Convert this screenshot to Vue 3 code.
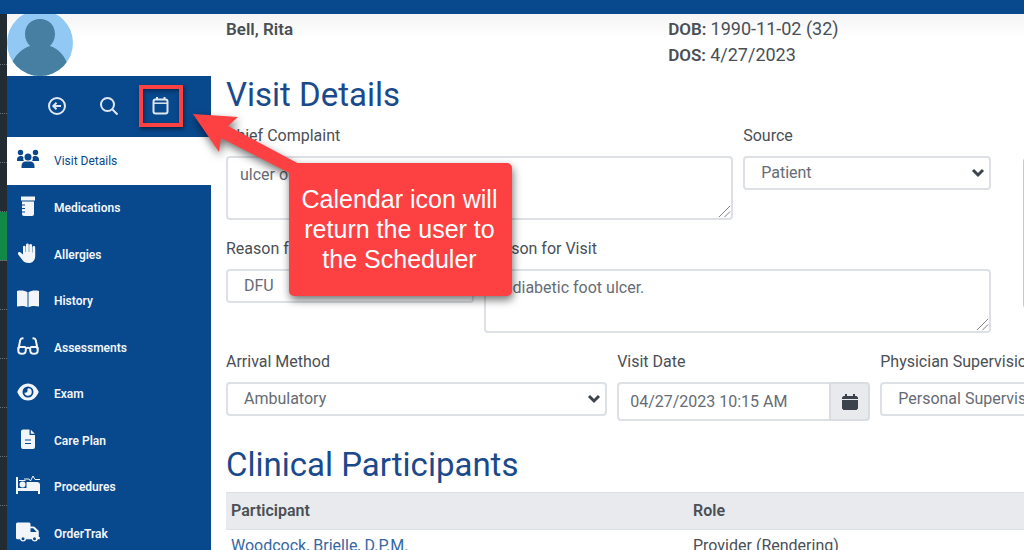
<script setup>
import { ref } from 'vue'

const chiefComplaint = ref('ulcer of right foot')
const visitReason = ref('A diabetic foot ulcer.')
const visitDate = ref('04/27/2023 10:15 AM')

const slots = Array.from({ length: 11 }, (_, i) => ({ id: i, booked: i === 4 }))

const items = [
  { label: 'Visit Details', icon: 'users', active: true },
  { label: 'Medications', icon: 'jar' },
  { label: 'Allergies', icon: 'hand' },
  { label: 'History', icon: 'book' },
  { label: 'Assessments', icon: 'glasses' },
  { label: 'Exam', icon: 'eye' },
  { label: 'Care Plan', icon: 'file' },
  { label: 'Procedures', icon: 'bed' },
  { label: 'OrderTrak', icon: 'truck' },
]
</script>

<template>
  <div class="app">
    <div class="topbar"></div>
    <div class="body">
      <div class="rail">
        <div v-for="s in slots" :key="s.id" class="slot" :class="{ booked: s.booked }"></div>
      </div>

      <aside class="sidebar">
        <div class="portrait">
          <svg class="avatar" viewBox="0 0 66 66" aria-label="Patient photo">
            <defs><clipPath id="face"><circle cx="33" cy="33" r="33" /></clipPath></defs>
            <g clip-path="url(#face)">
              <rect width="66" height="66" fill="#92c8f4" />
              <path d="M33 9c9 0 15 6.500 15 15 0 5-2 9-5 12 9 3 15 10 18 20v12H4V56c3-10 10-17 19-20-3-3-5-7-5-12 0-8.500 6-15 15-15z" fill="#467fa2" />
            </g>
          </svg>
        </div>

        <div class="tools">
          <button type="button" class="tool" aria-label="Back">
            <svg viewBox="0 0 20 20" class="line"><circle cx="10" cy="10" r="8" /><path d="M14 10H6.500M9.500 6.800 6.300 10l3.200 3.200" /></svg>
          </button>
          <button type="button" class="tool" aria-label="Search">
            <svg viewBox="0 0 20 20" class="line"><circle cx="8.500" cy="8.500" r="6.500" /><path d="M13.200 13.200 18.500 18.500" /></svg>
          </button>
          <button type="button" class="tool marked" aria-label="Calendar">
            <svg viewBox="0 0 20 20" class="line"><rect x="2.500" y="3.500" width="14" height="14" rx="2" /><path d="M3 7.200h13" stroke-width="1.500" /><path d="M6 1V3.500M13.500 1V3.500" /></svg>
          </button>
        </div>

        <nav class="menu">
          <a v-for="i in items" :key="i.label" href="#" class="item" :class="{ active: i.active }">
            <svg class="icon" viewBox="0 0 24 20">
              <g v-if="i.icon === 'users'">
                <circle cx="4.500" cy="3.500" r="2.700" /><circle cx="19.500" cy="3.500" r="2.700" />
                <circle cx="12" cy="8" r="3.500" />
                <path d="M1 12V10.500C1 8.500 2.500 7 4.500 7c1.500 0 2.500.5 3 1.200C7 9.500 7.200 11 8 12zM23 12v-1.500C23 8.500 21.500 7 19.500 7c-1.500 0-2.500.5-3 1.200.5 1.300.3 2.800-.5 3.800zM5.500 19V17c0-2.700 1.800-4.500 4-4.500h5c2.200 0 4 1.800 4 4.500v2z" />
              </g>
              <g v-else-if="i.icon === 'jar'">
                <path d="M5 .5h14v4H5z" />
                <path d="M6 5.500h12V18a2 2 0 0 1-2 2H8a2 2 0 0 1-2-2v-1.500h3v-1H6v-2.500h3v-1H6V9.500h3v-1H6z" />
              </g>
              <path v-else-if="i.icon === 'hand'" d="M7 11.500V4a1.300 1.300 0 0 1 2.600 0v5h.4V2a1.400 1.400 0 0 1 2.800 0V9h.4V2.300a1.400 1.400 0 0 1 2.800 0V9.500h.4V4.500a1.400 1.400 0 0 1 2.800 0V13c0 4.300-2.500 7-6.500 7-3 0-5-1-6.500-3.200l-4-5.300c-1-1.600.9-3.200 2.400-2z" />
              <path v-else-if="i.icon === 'book'" d="M11.500 3.300v15C8.500 16.800 5 16.700 1 17.500V2C5 1.200 9 1.600 11.500 3.300zM12.500 3.300v15c3-1.500 6.500-1.600 10.500-.8V2c-4-.8-8-.4-10.500 1.300z" />
              <g v-else-if="i.icon === 'glasses'" class="outline">
                <path d="M2.500 13 4.200 4.200Q4.800 2 7.500 2.400M21.500 13 19.800 4.200Q19.200 2 16.500 2.400M2.500 11h7.200M14.300 11h7.200M9.800 12.500q2.200-1.500 4.400 0" />
                <path d="M2.300 11.200v3.300q0 3.300 3.700 3.300t3.800-3.600v-3M21.700 11.200v3.300q0 3.300-3.700 3.300t-3.800-3.600v-3" />
              </g>
              <path v-else-if="i.icon === 'eye'" fill-rule="evenodd" d="M12 1.500c5 0 8.500 3.500 10.800 8.500-2.300 5-5.800 8.500-10.800 8.500S3.500 15 1.200 10C3.500 5 7 1.500 12 1.500zm0 3a5.500 5.500 0 1 0 0 11 5.500 5.500 0 0 0 0-11zm0 1.800a3.700 3.700 0 1 1-3.600 4.200c1.800.8 3.800-.8 3-3z" />
              <path v-else-if="i.icon === 'file'" fill-rule="evenodd" d="M7 .5h6.500V6H19v12a2 2 0 0 1-2 2H7a2 2 0 0 1-2-2V2.500a2 2 0 0 1 2-2zM14.800.7 18.800 4.700h-4zM9 10.500v1h6v-1zm0 3.500v1h6v-1z" />
              <g v-else-if="i.icon === 'bed'">
                <path d="M0 2h2v11h8.500V7H21q3 0 3 3v9h-2v-3H2v3H0z" />
                <path d="M3 5h6.500v1H3z" />
                <circle cx="6.500" cy="9.500" r="3" />
                <path class="trace" d="M8 4h5l1.500 2L17 1l2 3.500h5" />
              </g>
              <path v-else fill-rule="evenodd" d="M1.500.5h11.500A1.500 1.500 0 0 1 14.500 2v2.500h3l1.200.5 3.700 3.600.4 1.100V15h1v2.200h-1.900a3.200 3.200 0 0 1-6.200 0H10.200a3.200 3.200 0 0 1-6.200 0H1.500A1.500 1.500 0 0 1 0 15.700V2A1.500 1.500 0 0 1 1.500.5zM14.500 6.300v3.600h6.200L17.200 6.300zM7 15.200a1.500 1.500 0 1 0 0 3 1.500 1.500 0 0 0 0-3zm11.500 0a1.500 1.500 0 1 0 0 3 1.500 1.500 0 0 0 0-3z" />
            </svg>
            <span>{{ i.label }}</span>
          </a>
        </nav>
      </aside>

      <main class="main">
        <div class="content">
          <header class="patient">
            <strong>Bell, Rita</strong>
            <div>
              <div><strong>DOB:</strong> <span class="value">1990-11-02 (32)</span></div>
              <div><strong>DOS:</strong> <span class="value">4/27/2023</span></div>
            </div>
          </header>

          <h1>Visit Details</h1>

          <div class="split">
            <div class="stack">
              <div class="row complaint">
                <div class="field">
                  <label for="chief">Chief Complaint</label>
                  <div class="area">
                    <textarea id="chief" v-model="chiefComplaint"></textarea>
                    <svg class="grip" viewBox="0 0 14 14"><path d="M1 13 13 1M7 13l6-6" /></svg>
                  </div>
                </div>
                <div class="field">
                  <label for="source">Source</label>
                  <div class="pick">
                    <select id="source"><option>Patient</option></select>
                    <svg class="chevron" viewBox="0 0 14 10"><path d="M2 2l5 5 5-5" /></svg>
                  </div>
                </div>
              </div>
              <div class="row reason">
                <div class="field">
                  <label for="reason">Reason for DFU</label>
                  <div class="pick">
                    <select id="reason"><option>DFU</option></select>
                    <svg class="chevron" viewBox="0 0 14 10"><path d="M2 2l5 5 5-5" /></svg>
                  </div>
                </div>
                <div class="field">
                  <label for="why">Reason for Visit</label>
                  <div class="area">
                    <textarea id="why" v-model="visitReason"></textarea>
                    <svg class="grip" viewBox="0 0 14 14"><path d="M1 13 13 1M7 13l6-6" /></svg>
                  </div>
                </div>
              </div>
            </div>
            <div class="notes"></div>
          </div>

          <div class="row arrival">
            <div class="field">
              <label for="arrival">Arrival Method</label>
              <div class="pick">
                <select id="arrival"><option>Ambulatory</option></select>
                <svg class="chevron" viewBox="0 0 14 10"><path d="M2 2l5 5 5-5" /></svg>
              </div>
            </div>
            <div class="field">
              <label for="date">Visit Date</label>
              <div class="date">
                <input id="date" v-model="visitDate" type="text" />
                <button type="button" aria-label="Choose date">
                  <svg viewBox="0 0 16 18"><path d="M3 1h2v2h6V1h2v2h1.500L16 4.500V6H0V4.500L1.500 3H3zM0 7h16v8.500L14.500 17h-13L0 15.500z" /></svg>
                </button>
              </div>
            </div>
            <div class="field">
              <label for="supervision">Physician Supervision</label>
              <div class="pick">
                <select id="supervision"><option>Personal Supervision</option></select>
                <svg class="chevron" viewBox="0 0 14 10"><path d="M2 2l5 5 5-5" /></svg>
              </div>
            </div>
          </div>

          <h2>Clinical Participants</h2>
          <table>
            <thead>
              <tr><th scope="col">Participant</th><th scope="col">Role</th></tr>
            </thead>
            <tbody>
              <tr><td><a href="#">Woodcock, Brielle, D.P.M.</a></td><td>Provider (Rendering)</td></tr>
            </tbody>
          </table>
        </div>
      </main>
    </div>

    <div class="callout">
      <svg class="arrow" viewBox="0 0 110 66"><path d="M0 0 45 3 35 12 110 52V66L28 24 26 38z" /></svg>
      <p>Calendar icon will return the user to the Scheduler</p>
    </div>
  </div>
</template>

<style>
body {
  margin: 0;
  overflow: hidden;
}
</style>

<style scoped>
* {
  box-sizing: border-box;
}
.app {
  position: relative;
  display: flex;
  flex-direction: column;
  height: 100vh;
  overflow: hidden;
  background: #fff;
  color: #4a4f56;
  font: 16px/26px Roboto, "Liberation Sans", sans-serif;
}
.topbar {
  flex: none;
  height: 14px;
  background: #08488c;
}
.body {
  display: flex;
  flex: 1;
  min-height: 0;
}
.rail {
  flex: none;
  width: 7px;
  padding-top: 2px;
  overflow: hidden;
  background: #232c33;
}
.slot {
  height: 49px;
  border-bottom: 1px dotted #6a7278;
}
.slot.booked {
  background: #118845;
}
.sidebar {
  flex: none;
  display: flex;
  flex-direction: column;
  width: 204px;
  background: #08488c;
}
.portrait {
  flex: none;
  display: flex;
  align-items: flex-end;
  height: 62px;
  overflow: hidden;
  background: linear-gradient(#f4f4f5, #fff 24px);
}
.avatar {
  flex: none;
  width: 66px;
  height: 66px;
}
.tools {
  flex: none;
  display: flex;
  align-items: center;
  gap: 8px;
  height: 61px;
  padding-bottom: 2px;
  padding-left: 28px;
}
.tool {
  position: relative;
  display: flex;
  align-items: center;
  justify-content: center;
  width: 44px;
  height: 42px;
  padding: 0;
  border: 0;
  background: none;
}
.tool.marked::after {
  content: "";
  position: absolute;
  inset: 0;
  border: 4px solid #fb4141;
  box-shadow: 1px 2px 4px rgba(0, 0, 0, 0.5), inset 1px 2px 4px rgba(0, 0, 0, 0.4);
}
.line {
  width: 20px;
  height: 20px;
  fill: none;
  stroke: #dfe8f2;
  stroke-width: 2;
}
.menu {
  flex: none;
  display: grid;
  grid-template-rows: 48px;
  grid-auto-rows: 1fr;
  height: 420px;
}
.item {
  display: flex;
  align-items: center;
  gap: 14px;
  padding-left: 9px;
  color: #f2f6fa;
  font-size: 12px;
  font-weight: 600;
  text-decoration: none;
}
.item.active {
  background: #fff;
  color: #08488c;
  font-weight: 400;
}
.icon {
  width: 24px;
  height: 20px;
  margin-bottom: 4px;
  fill: currentColor;
}
.outline {
  fill: none;
  stroke: currentColor;
  stroke-width: 2;
}
.trace {
  fill: none;
  stroke: currentColor;
  stroke-width: 1;
}
.main {
  flex: 1;
  min-width: 0;
  padding-left: 15px;
  overflow: hidden;
  background: linear-gradient(#f4f4f5, #fff 24px);
}
.content {
  width: 130%;
}
.patient {
  display: grid;
  grid-template-columns: 442fr 595fr;
  height: 60px;
  padding-top: 2px;
  font-size: 17px;
}
.value {
  font-size: 18px;
}
strong,
th {
  font-weight: 600;
}
h1,
h2 {
  margin: 0;
  color: #1a4a8c;
  font-size: 33px;
  font-weight: 400;
  line-height: 42px;
}
h1 {
  padding-bottom: 7px;
}
h2 {
  padding-top: 23px;
  padding-bottom: 6px;
}
.split {
  display: grid;
  grid-template-columns: 765fr 240fr;
  gap: 32px;
}
.stack {
  display: flex;
  flex-direction: column;
  gap: 16px;
}
.notes {
  margin-top: 34px;
  height: 152px;
  border: 1px solid #c3cad1;
  border-radius: 4px;
}
.row {
  display: grid;
  column-gap: 10px;
  align-items: start;
}
.complaint {
  grid-template-columns: 507fr 248fr;
}
.reason {
  grid-template-columns: 248fr 507fr;
}
.arrival {
  grid-template-columns: 381fr 253fr 383fr;
  margin-top: 16px;
}
.field {
  display: flex;
  flex-direction: column;
  gap: 7px;
  min-width: 0;
}
.area,
.pick {
  position: relative;
}
textarea,
select,
input {
  display: block;
  width: 100%;
  margin: 0;
  border: 2px solid #dde1e6;
  border-radius: 4px;
  background: #fff;
  color: #666c74;
  font: inherit;
}
textarea {
  height: 64px;
  padding: 4px 12px;
  resize: none;
  overflow: hidden;
}
select {
  height: 34px;
  padding: 0 16px;
  appearance: none;
}
.chevron {
  position: absolute;
  top: 12px;
  right: 6px;
  width: 14px;
  height: 10px;
  fill: none;
  stroke: #3d444c;
  stroke-width: 3;
  pointer-events: none;
}
.grip {
  position: absolute;
  right: 2px;
  bottom: 2px;
  width: 13px;
  height: 13px;
  fill: none;
  stroke: #777;
  stroke-width: 1;
  pointer-events: none;
}
.date {
  display: flex;
}
.date input {
  flex: 1;
  min-width: 0;
  height: 39px;
  padding: 0 11px;
  border-right: 0;
  border-radius: 4px 0 0 4px;
}
.date button {
  display: flex;
  align-items: center;
  justify-content: center;
  width: 41px;
  padding: 0;
  border: 2px solid #d9dde2;
  border-radius: 0 4px 4px 0;
  background: #e8eaed;
}
.date svg {
  width: 16px;
  height: 18px;
  fill: #3b424b;
}
table {
  width: 100%;
  border-collapse: collapse;
  table-layout: fixed;
}
th,
td {
  padding: 3px 5px;
  text-align: left;
}
th {
  height: 37px;
  border-top: 1px solid #dce0e4;
  border-bottom: 1px solid #dce0e4;
  background: #e8eaed;
}
th:first-child {
  width: 462px;
}
td a {
  color: #3567a3;
  text-decoration: none;
}
.callout {
  position: absolute;
  top: 163px;
  left: 289px;
  width: 223px;
  padding: 21px 9px 22px 7px;
  border-radius: 5px;
  background: #fd4142;
  filter: drop-shadow(1px 4px 4px rgba(0, 0, 0, 0.55));
  color: #fff;
  font: 25px/30px "Liberation Sans", Arial, sans-serif;
  text-align: center;
}
.callout p {
  position: relative;
  margin: 0;
}
.arrow {
  position: absolute;
  top: -49px;
  left: -96px;
  width: 110px;
  height: 66px;
  fill: #fd4142;
}
</style>
